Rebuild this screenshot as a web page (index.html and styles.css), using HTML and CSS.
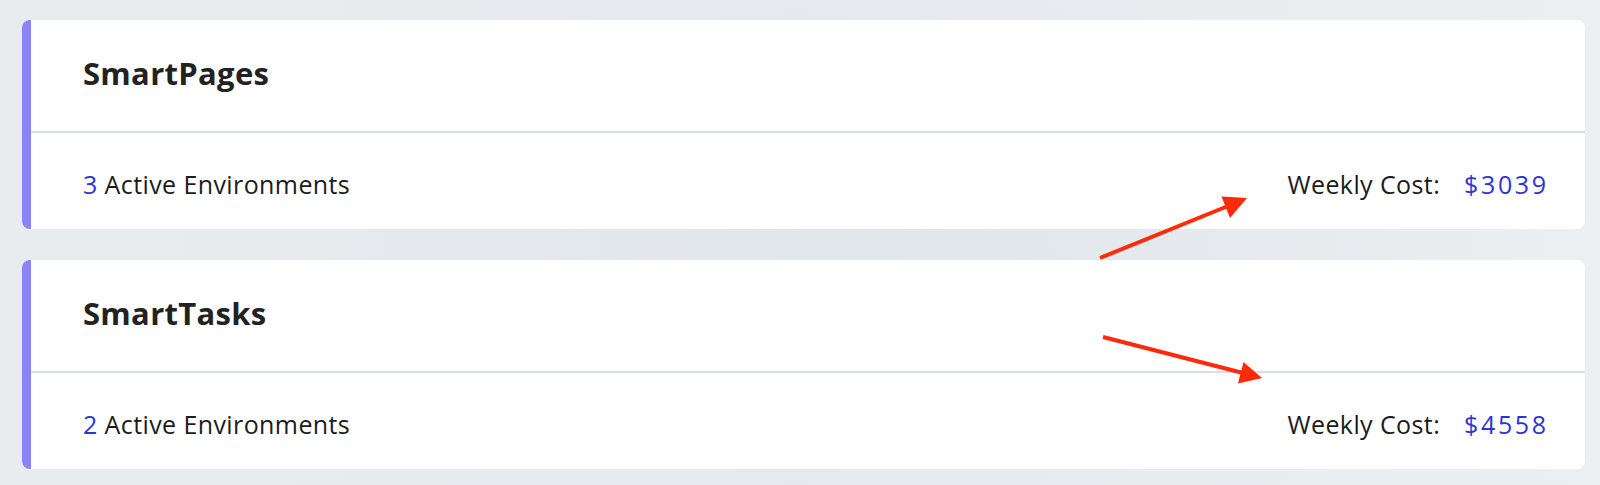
FILE: index.html
```html
<!DOCTYPE html>
<html lang="en">
<head>
<meta charset="utf-8">
<title>Environments</title>
<link rel="stylesheet" href="styles.css">
</head>
<body>
<main class="page">
  <section class="card">
    <header class="card-head"><h2 class="card-title">SmartPages</h2></header>
    <div class="card-body">
      <div class="envs"><span class="num">3</span> Active Environments</div>
      <div class="cost"><span class="cost-label">Weekly Cost:</span><span class="num amount">$3039</span></div>
    </div>
  </section>
  <section class="card">
    <header class="card-head"><h2 class="card-title">SmartTasks</h2></header>
    <div class="card-body">
      <div class="envs"><span class="num">2</span> Active Environments</div>
      <div class="cost"><span class="cost-label">Weekly Cost:</span><span class="num amount">$4558</span></div>
    </div>
  </section>
  <svg class="annot" width="1600" height="485" viewBox="0 0 1600 485" aria-hidden="true">
    <line x1="1100" y1="258" x2="1228" y2="206" stroke="#ff2a08" stroke-width="4"/>
    <polygon points="1247,198 1230,218 1221.5,196.5" fill="#ff2a08"/>
    <line x1="1103" y1="337" x2="1243" y2="373" stroke="#ff2a08" stroke-width="4"/>
    <polygon points="1262,378 1238,383.5 1243.5,362" fill="#ff2a08"/>
  </svg>
</main>
</body>
</html>
```
FILE: styles.css
```css
* { box-sizing: border-box; }
html, body { margin: 0; padding: 0; }
body {
  width: 1600px;
  height: 485px;
  overflow: hidden;
  font-family: "Open Sans", "Liberation Sans", sans-serif;
  background:
    radial-gradient(ellipse 700px 260px at 850px 240px, #e2e7eb 0%, rgba(226,231,235,0) 100%),
    linear-gradient(90deg, #e9ecef 0%, #e6eaee 50%, #eceff2 100%);
}
.page {
  position: relative;
  display: flex;
  flex-direction: column;
  gap: 31px;
  padding: 20px 15px 0 22px;
  height: 485px;
}
.card {
  background: #ffffff;
  border-radius: 8px;
  border-left: 9px solid #8a84fb;
  height: 209px;
  display: flex;
  flex-direction: column;
}
.card-head {
  height: 113px;
  padding: 38px 0 0 52px;
  border-bottom: 2px solid #d6dee8;
}
.card-title {
  margin: 0;
  font-size: 31px;
  line-height: 31px;
  font-weight: 700;
  color: #222222;
  letter-spacing: 0.3px;
}
.card-body {
  flex: 1;
  display: flex;
  justify-content: space-between;
  align-items: flex-start;
  padding: 39px 39px 0 52px;
  font-size: 25px;
  line-height: 25px;
  color: #1b1b1b;
  letter-spacing: 0.4px;
}
.num { color: #2d34d6; }
.cost { display: flex; gap: 24px; }
.amount { letter-spacing: 2.6px; margin-right: -2.6px; }
.annot {
  position: absolute;
  left: 0;
  top: 0;
  pointer-events: none;
}
```
